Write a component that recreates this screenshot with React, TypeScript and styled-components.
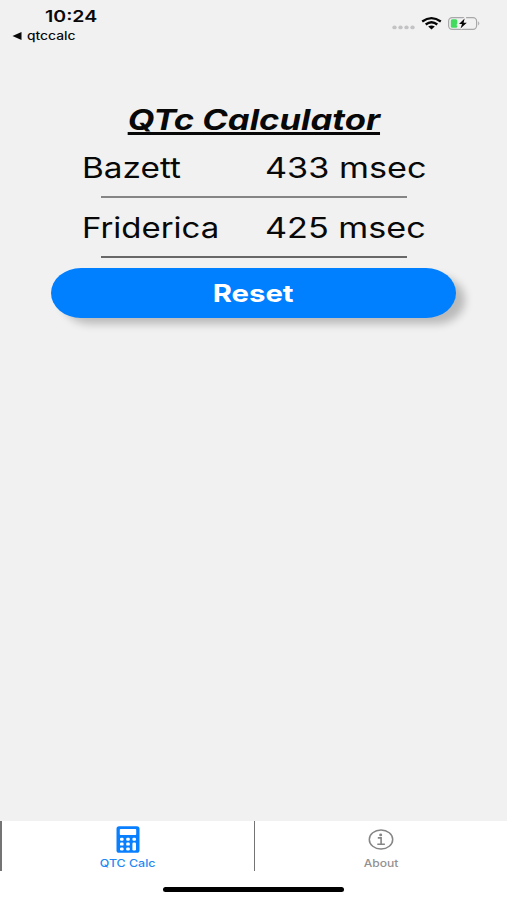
import React from "react";
import styled, { createGlobalStyle } from "styled-components";

const GlobalStyle = createGlobalStyle`
  * { box-sizing: border-box; }
  body { margin: 0; background: #f1f1f1; }
`;

const Screen = styled.div`
  width: 507px;
  height: 900px;
  display: flex;
  flex-direction: column;
  overflow: hidden;
  background: #f1f1f1;
  color: #080808;
  font-family: Inter, "Liberation Sans", sans-serif;
`;

const Wide = styled.span<{ $x: number; $origin?: string }>`
  display: inline-block;
  white-space: nowrap;
  transform: scaleX(${(p) => p.$x});
  transform-origin: ${(p) => p.$origin ?? "left"} center;
`;

const StatusBar = styled.header`
  height: 102px;
  display: flex;
  justify-content: space-between;
  padding: 7px 27px 0 12px;
`;

const StatusLeft = styled.div`
  display: flex;
  flex-direction: column;
`;

const Clock = styled.div`
  height: 21px;
  padding-left: 33px;
  font-size: 15.5px;
  line-height: 20px;
  font-weight: 600;
`;

const BackLink = styled.div`
  display: flex;
  align-items: center;
  gap: 5px;
  height: 16px;
  font-size: 11.5px;
  line-height: 16px;
  font-weight: 500;
`;

const StatusIcons = styled.div`
  display: flex;
  height: 32px;
  align-items: center;
`;

const Main = styled.main`
  flex: 1;
  display: flex;
  flex-direction: column;
  align-items: center;
`;

const Title = styled.h1`
  margin: 0;
  height: 35px;
  font-size: 28.5px;
  line-height: 35px;
  font-weight: 700;
  font-style: italic;

  span {
    text-decoration: underline;
    text-decoration-thickness: 3px;
    text-underline-offset: 2px;
  }
`;

const Result = styled.div`
  width: 344px;
  height: 60px;
  display: grid;
  grid-template-columns: 183px 161px;
  grid-template-rows: 59px 1px;
  font-size: 28.5px;
  line-height: 61px;
`;

const Rule = styled.div<{ $color: string; $thickness: number }>`
  grid-column: 1 / -1;
  justify-self: center;
  width: 306px;
  height: ${(p) => p.$thickness}px;
  background: ${(p) => p.$color};
`;

const ResetButton = styled.button`
  width: 405px;
  height: 50px;
  margin: 11px 0 0;
  padding: 0;
  border: 0;
  border-radius: 30px / 25px;
  background: #007fff;
  box-shadow: 10px 7px 9px -1px rgba(0, 0, 0, 0.23);
  color: #fff;
  font: 700 24px/51px Inter, sans-serif;
`;

const Footer = styled.footer`
  height: 79px;
  background: #fff;
  display: flex;
  flex-direction: column;
  align-items: center;
`;

const Tabs = styled.nav`
  width: 100%;
  height: 49px;
  display: grid;
  grid-template-columns: 254px 253px;
`;

const Tab = styled.div<{ $color: string; $edge: number }>`
  display: flex;
  flex-direction: column;
  align-items: center;
  padding-top: 5px;
  padding-right: ${(p) => p.$edge - 1}px;
  border-left: ${(p) => p.$edge}px solid #747474;
  color: ${(p) => p.$color};
  font-size: 10.5px;
  line-height: 14px;
  font-weight: 500;

  svg { margin-bottom: 4px; }
`;

const HomeIndicator = styled.div`
  width: 181px;
  height: 5px;
  margin-top: 17px;
  border-radius: 3px;
  background: #000;
`;

const StatusGlyphs = () => (
  <svg width="90" height="18" viewBox="0 0 90 18">
    <g fill="#c3c3c5">
      {[4.5, 10.5, 16.5, 22.5].map((x) => (
        <ellipse key={x} cx={x} cy="13.4" rx="2.2" ry="1.9" />
      ))}
    </g>
    <g fill="none" stroke="#050505" strokeWidth="2.3">
      <path d="M32.2 7.5Q41.5 .7 50.8 7.5" />
      <path d="M35.7 10.5Q41.5 6 47.3 10.5" />
    </g>
    <path d="M38.2 12.6Q41.5 10.2 44.8 12.6L41.5 15.4Z" fill="#050505" />
    <rect x="58.6" y="3.7" width="28" height="11.6" rx="3.6" fill="none" stroke="#a8a8aa" strokeWidth="1.2" />
    <path d="M88.2 7.3Q90.4 9.4 88.2 11.4Z" fill="#a8a8aa" />
    <rect x="60.8" y="5.3" width="6.5" height="8.4" rx="1.5" fill="#42db60" />
    <path d="M74.6 4.6L69 10.1H72L70.5 14.6L76.8 8.7H73.6Z" fill="#050505" stroke="#f1f1f1" strokeWidth="2.4" paintOrder="stroke" />
  </svg>
);

const CalculatorIcon = () => (
  <svg width="24" height="27" viewBox="0 0 24 27">
    <rect x=".5" y=".2" width="23" height="26.6" rx="2.6" fill="#087fff" />
    <g fill="#fff">
      <rect x="3.8" y="3" width="16.4" height="6" rx=".8" />
      {[4, 10.2, 16.4].map((x) => (
        <rect key={x} x={x} y="11.8" width="3.6" height="3" rx="1.2" />
      ))}
      {[4, 10.2].map((x) =>
        [16.6, 21.4].map((y) => <rect key={`${x}-${y}`} x={x} y={y} width="3.6" height="3" rx="1.2" />)
      )}
      <rect x="16.4" y="16.6" width="3.6" height="7.8" rx="1.2" />
    </g>
  </svg>
);

const InfoIcon = () => (
  <svg width="26" height="27" viewBox="0 0 26 27">
    <ellipse cx="13" cy="13.5" rx="11.7" ry="9.6" fill="none" stroke="#858585" strokeWidth="1.5" />
    <ellipse cx="12.7" cy="8.9" rx="1.5" ry="1.3" fill="#858585" />
    <path d="M9.8 11.9H13.1V18.2M9.3 18.3H16.9" fill="none" stroke="#858585" strokeWidth="1.6" />
  </svg>
);

export default function App() {
  return (
    <>
      <GlobalStyle />
      <Screen>
        <StatusBar>
          <StatusLeft>
            <Clock><Wide $x={1.26}>10:24</Wide></Clock>
            <BackLink>
              <svg width="10" height="8" viewBox="0 0 10 8"><path d="M.5 4L9.5 0V8Z" fill="#080808" /></svg>
              <Wide $x={1.2}>qtccalc</Wide>
            </BackLink>
          </StatusLeft>
          <StatusIcons><StatusGlyphs /></StatusIcons>
        </StatusBar>
        <Main>
          <Title><Wide $x={1.215} $origin="center">QTc Calculator</Wide></Title>
          <Result>
            <Wide $x={1.17}>Bazett</Wide>
            <Wide $x={1.2}>433 msec</Wide>
            <Rule $color="#858585" $thickness={2} />
          </Result>
          <Result>
            <Wide $x={1.155}>Friderica</Wide>
            <Wide $x={1.2}>425 msec</Wide>
            <Rule $color="#686868" $thickness={2} />
          </Result>
          <ResetButton><Wide $x={1.22} $origin="center">Reset</Wide></ResetButton>
        </Main>
        <Footer>
          <Tabs>
            <Tab $color="#2189f5" $edge={2}>
              <CalculatorIcon />
              <Wide $x={1.18} $origin="center">QTC Calc</Wide>
            </Tab>
            <Tab $color="#929292" $edge={1}>
              <InfoIcon />
              <Wide $x={1.15} $origin="center">About</Wide>
            </Tab>
          </Tabs>
          <HomeIndicator />
        </Footer>
      </Screen>
    </>
  );
}
